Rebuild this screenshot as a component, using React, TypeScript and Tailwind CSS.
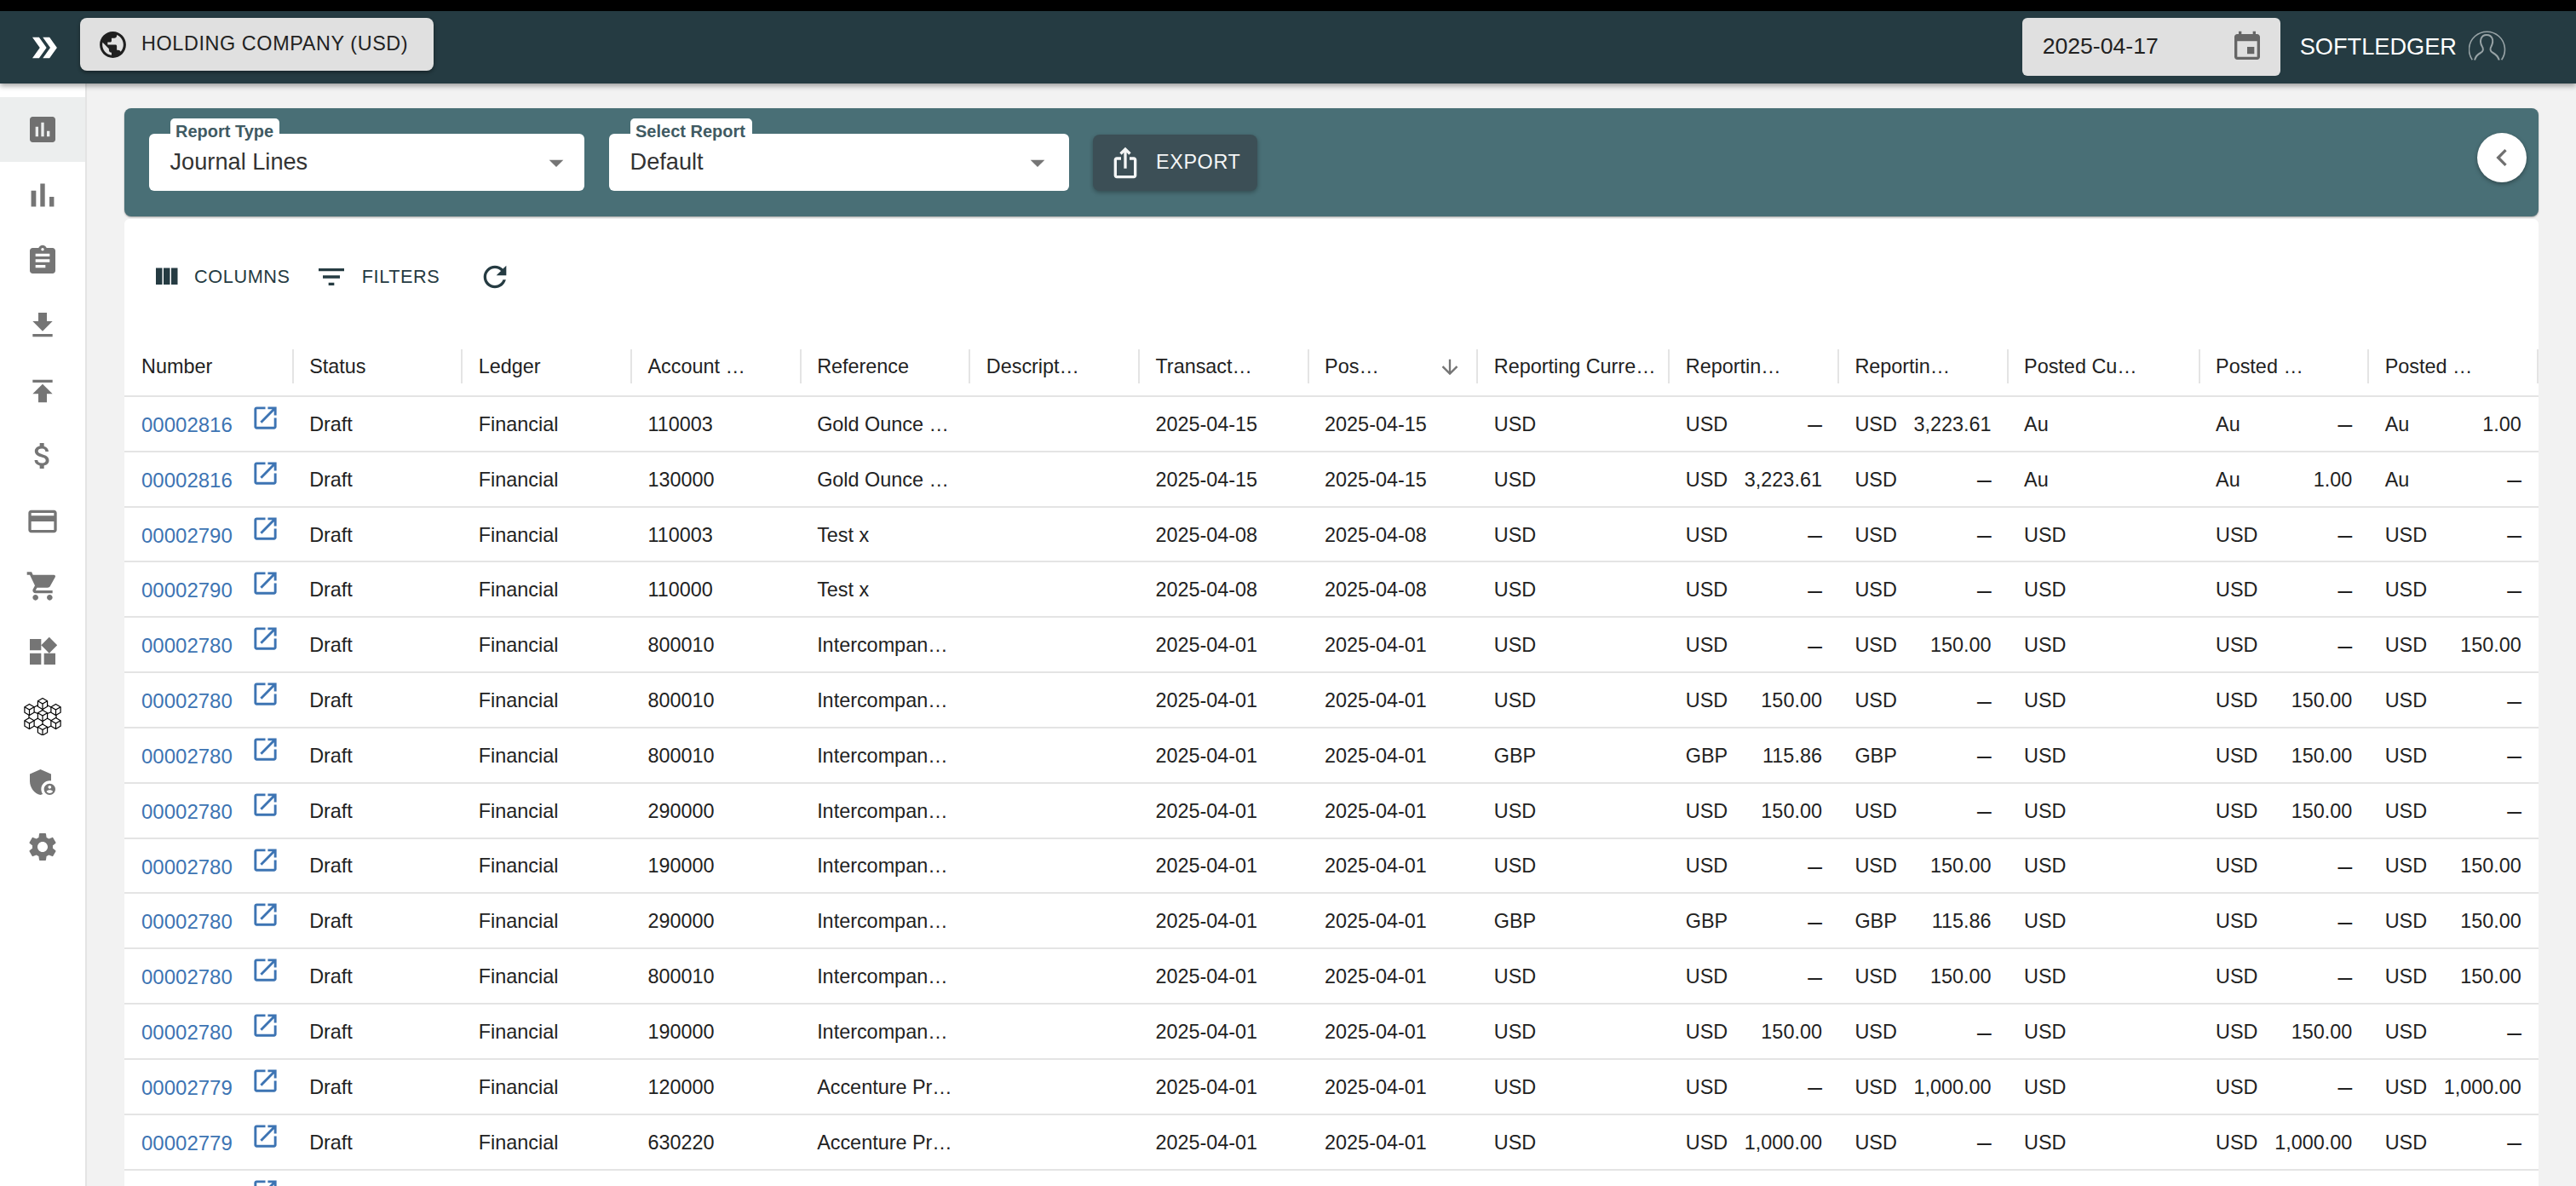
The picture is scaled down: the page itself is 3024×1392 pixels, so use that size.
import React from 'react';

const Icon: React.FC<{ d: string | string[]; className?: string }> = ({ d, className }) => (
  <svg viewBox="0 0 24 24" fill="currentColor" className={className}>
    {(Array.isArray(d) ? d : [d]).map((p, i) => (
      <path key={i} d={p} />
    ))}
  </svg>
);

const paths = {
  assessment: 'M19 3H5c-1.1 0-2 .9-2 2v14c0 1.1.9 2 2 2h14c1.1 0 2-.9 2-2V5c0-1.1-.9-2-2-2zM9 17H7v-7h2v7zm4 0h-2V7h2v10zm4 0h-2v-4h2v4z',
  barChart: 'M5 9.2h3V19H5zM10.6 5h2.8v14h-2.8zm5.6 8H19v6h-2.8z',
  assignment: 'M19 3h-4.18C14.4 1.84 13.3 1 12 1c-1.3 0-2.4.84-2.82 2H5c-1.1 0-2 .9-2 2v14c0 1.1.9 2 2 2h14c1.1 0 2-.9 2-2V5c0-1.1-.9-2-2-2zm-7 0c.55 0 1 .45 1 1s-.45 1-1 1-1-.45-1-1 .45-1 1-1zm2 14H7v-2h7v2zm3-4H7v-2h10v2zm0-4H7V7h10v2z',
  download: 'M19 9h-4V3H9v6H5l7 7 7-7zM5 18v2h14v-2H5z',
  publish: 'M5 4v2h14V4H5zm0 10h4v6h6v-6h4l-7-7-7 7z',
  money: 'M11.8 10.9c-2.27-.59-3-1.2-3-2.15 0-1.09 1.01-1.85 2.7-1.85 1.78 0 2.44.85 2.5 2.1h2.21c-.07-1.72-1.12-3.3-3.21-3.81V3h-3v2.16c-1.94.42-3.5 1.68-3.5 3.61 0 2.31 1.91 3.46 4.7 4.13 2.5.6 3 1.48 3 2.41 0 .69-.49 1.79-2.7 1.79-2.06 0-2.87-.92-2.98-2.1h-2.2c.12 2.19 1.76 3.42 3.68 3.83V21h3v-2.15c1.95-.37 3.5-1.5 3.5-3.55 0-2.84-2.43-3.81-4.7-4.4z',
  card: 'M20 4H4c-1.11 0-1.99.89-1.99 2L2 18c0 1.11.89 2 2 2h16c1.11 0 2-.89 2-2V6c0-1.11-.89-2-2-2zm0 14H4v-6h16v6zm0-10H4V6h16v2z',
  cart: 'M7 18c-1.1 0-1.99.9-1.99 2S5.9 22 7 22s2-.9 2-2-.9-2-2-2zM1 2v2h2l3.6 7.59-1.35 2.45c-.16.28-.25.61-.25.96 0 1.1.9 2 2 2h12v-2H7.42c-.14 0-.25-.11-.25-.25l.03-.12.9-1.63h7.45c.75 0 1.41-.41 1.75-1.03l3.58-6.49c.08-.14.12-.31.12-.48 0-.55-.45-1-1-1H5.21l-.94-2H1zm16 16c-1.1 0-1.99.9-1.99 2s.89 2 1.99 2 2-.9 2-2-.9-2-2-2z',
  widgets: 'M13 13v8h8v-8h-8zM3 21h8v-8H3v8zM3 3v8h8V3H3zm13.66-1.31L11 7.34 16.66 13l5.66-5.66-5.66-5.65z',
  shield: [
    'M17 11c.34 0 .67.04 1 .09V6.27L10.5 3 3 6.27v4.91c0 4.54 3.2 8.79 7.5 9.82.55-.13 1.08-.32 1.6-.55-.69-.98-1.1-2.17-1.1-3.45 0-3.31 2.69-6 6-6z',
    'M17 13c-2.21 0-4 1.79-4 4s1.79 4 4 4 4-1.79 4-4-1.79-4-4-4zm0 1.38c.62 0 1.12.51 1.12 1.12s-.51 1.12-1.12 1.12-1.12-.51-1.12-1.12.5-1.12 1.12-1.12zm0 5.37c-.93 0-1.74-.46-2.24-1.17.05-.72 1.51-1.08 2.24-1.08s2.19.36 2.24 1.08c-.5.71-1.31 1.17-2.24 1.17z',
  ],
  settings: 'M19.14 12.94c.04-.3.06-.61.06-.94 0-.32-.02-.64-.07-.94l2.03-1.58c.18-.14.23-.41.12-.61l-1.92-3.32c-.12-.22-.37-.29-.59-.22l-2.39.96c-.5-.38-1.03-.7-1.62-.94l-.36-2.54c-.04-.24-.24-.41-.48-.41h-3.84c-.24 0-.43.17-.47.41l-.36 2.54c-.59.24-1.13.57-1.62.94l-2.39-.96c-.22-.08-.47 0-.59.22L2.74 8.87c-.12.21-.08.47.12.61l2.03 1.58c-.05.3-.09.63-.09.94s.02.64.07.94l-2.03 1.58c-.18.14-.23.41-.12.61l1.92 3.32c.12.22.37.29.59.22l2.39-.96c.5.38 1.03.7 1.62.94l.36 2.54c.05.24.24.41.48.41h3.84c.24 0 .44-.17.47-.41l.36-2.54c.59-.24 1.13-.56 1.62-.94l2.39.96c.22.08.47 0 .59-.22l1.92-3.32c.12-.22.07-.47-.12-.61l-2.01-1.58zM12 15.6c-1.98 0-3.6-1.62-3.6-3.6s1.62-3.6 3.6-3.6 3.6 1.62 3.6 3.6-1.62 3.6-3.6 3.6z',
  globe: 'M12 2C6.48 2 2 6.48 2 12s4.48 10 10 10 10-4.48 10-10S17.52 2 12 2zm-1 17.93c-3.95-.49-7-3.85-7-7.93 0-.62.08-1.21.21-1.79L9 15v1c0 1.1.9 2 2 2v1.93zm6.9-2.54c-.26-.81-1-1.39-1.9-1.39h-1v-3c0-.55-.45-1-1-1H8v-2h2c.55 0 1-.45 1-1V7h2c1.1 0 2-.9 2-2v-.41c2.93 1.19 5 4.06 5 7.41 0 2.08-.8 3.97-2.1 5.39z',
  event: 'M17 12h-5v5h5v-5zM16 1v2H8V1H6v2H5c-1.11 0-1.99.9-1.99 2L3 19c0 1.1.89 2 2 2h14c1.1 0 2-.9 2-2V5c0-1.1-.9-2-2-2h-1V1h-2zm3 18H5V8h14v11z',
  openNew: 'M19 19H5V5h7V3H5c-1.11 0-2 .9-2 2v14c0 1.1.89 2 2 2h14c1.1 0 2-.9 2-2v-7h-2v7zM14 3v2h3.59l-9.83 9.83 1.41 1.41L19 6.41V10h2V3h-7z',
  columns: 'M10 18h5V5h-5v13zm-6 0h5V5H4v13zM16 5v13h5V5h-5z',
  filter: 'M10 18h4v-2h-4v2zM3 6v2h18V6H3zm3 7h12v-2H6v2z',
  refresh: 'M17.65 6.35C16.2 4.9 14.21 4 12 4c-4.42 0-7.99 3.58-7.99 8s3.57 8 7.99 8c3.73 0 6.84-2.55 7.73-6h-2.08c-.82 2.33-3.04 4-5.65 4-3.31 0-6-2.69-6-6s2.69-6 6-6c1.66 0 3.14.69 4.22 1.78L13 11h7V4l-2.35 2.35z',
  chevronLeft: 'M15.41 7.41L14 6l-6 6 6 6 1.41-1.41L10.83 12z',
  doubleArrow: ['M15.5 5H11l5 7-5 7h4.5l5-7z', 'M8.5 5H4l5 7-5 7h4.5l5-7z'],
  share: 'M16 5l-1.42 1.42-1.59-1.59V16h-1.98V4.83L9.42 6.42 8 5l4-4 4 4zm4 5v11c0 1.1-.9 2-2 2H6c-1.11 0-2-.9-2-2V10c0-1.11.89-2 2-2h3v2H6v11h12V10h-3V8h3c1.1 0 2 .89 2 2z',
  arrowDown: 'M20 12l-1.41-1.41L13 16.17V4h-2v12.17l-5.58-5.59L4 12l8 8 8-8z',
  caret: 'M7 10l5 5 5-5z',
};

const Cube: React.FC<{ x: number; y: number }> = ({ x, y }) => (
  <g transform={`translate(${x} ${y})`}>
    <path d="M0 -6.5L5.6 -3.2V3.2L0 6.5L-5.6 3.2V-3.2Z" fill="white" />
    <path d="M-5.6 -3.2L0 0L5.6 -3.2M0 0V6.5" />
  </g>
);

const BlockchainIcon = () => (
  <svg viewBox="0 0 44 44" fill="none" stroke="black" strokeWidth="1.2" className="w-[44px] h-[44px]">
    <path d="M22 6L38 14V30L22 38L6 30V14Z M22 21L22 6 M22 21L6 14 M22 21L38 14 M22 21V38 M22 21L6 30 M22 21L38 30" />
    <Cube x={22} y={7} />
    <Cube x={6.5} y={14} />
    <Cube x={37.5} y={14} />
    <Cube x={6.5} y={30} />
    <Cube x={37.5} y={30} />
    <Cube x={22} y={37.5} />
    <Cube x={22} y={21} />
  </svg>
);

const AvatarIcon = () => (
  <svg viewBox="0 0 44 36" fill="none" stroke="#98a3a6" strokeWidth="1.6" className="w-[44px] h-[36px] ml-[14px] -mt-[2px]">
    <path d="M4.3 34.3A21 21 0 1 1 38.6 34.3" />
    <path strokeWidth="2" d="M7 34.5C8.5 29 11 27.5 14 26C17.5 24.5 17.5 21 15.8 18.5C14 15.5 13.5 12.5 14.5 9.5C15.5 6.5 18 5 21 5C24 5 26.8 6.5 27.8 9.5C28.8 12.5 28 15.5 26.5 18.5C24.8 21 25 24.5 28.5 26C31.5 27.5 34 29 35.8 34.5" />
  </svg>
);

const sidebarItems = [
  paths.barChart,
  paths.assignment,
  paths.download,
  paths.publish,
  paths.money,
  paths.card,
  paths.cart,
  paths.widgets,
];

const headers = [
  'Number',
  'Status',
  'Ledger',
  'Account …',
  'Reference',
  'Descript…',
  'Transact…',
  'Pos…',
  'Reporting Curre…',
  'Reportin…',
  'Reportin…',
  'Posted Cu…',
  'Posted …',
  'Posted …',
];

type Row = {
  number: string;
  account: string;
  reference: string;
  date: string;
  currency: string;
  rep1: string;
  rep2: string;
  postedCurrency: string;
  posted1: string;
  posted2: string;
};

const D = '–';

const row = (
  number: string,
  account: string,
  reference: string,
  date: string,
  currency: string,
  rep1: string,
  rep2: string,
  postedCurrency: string,
  posted1: string,
  posted2: string,
): Row => ({ number, account, reference, date, currency, rep1, rep2, postedCurrency, posted1, posted2 });

const rows: Row[] = [
  row('00002816', '110003', 'Gold Ounce …', '2025-04-15', 'USD', D, '3,223.61', 'Au', D, '1.00'),
  row('00002816', '130000', 'Gold Ounce …', '2025-04-15', 'USD', '3,223.61', D, 'Au', '1.00', D),
  row('00002790', '110003', 'Test x', '2025-04-08', 'USD', D, D, 'USD', D, D),
  row('00002790', '110000', 'Test x', '2025-04-08', 'USD', D, D, 'USD', D, D),
  row('00002780', '800010', 'Intercompan…', '2025-04-01', 'USD', D, '150.00', 'USD', D, '150.00'),
  row('00002780', '800010', 'Intercompan…', '2025-04-01', 'USD', '150.00', D, 'USD', '150.00', D),
  row('00002780', '800010', 'Intercompan…', '2025-04-01', 'GBP', '115.86', D, 'USD', '150.00', D),
  row('00002780', '290000', 'Intercompan…', '2025-04-01', 'USD', '150.00', D, 'USD', '150.00', D),
  row('00002780', '190000', 'Intercompan…', '2025-04-01', 'USD', D, '150.00', 'USD', D, '150.00'),
  row('00002780', '290000', 'Intercompan…', '2025-04-01', 'GBP', D, '115.86', 'USD', D, '150.00'),
  row('00002780', '800010', 'Intercompan…', '2025-04-01', 'USD', D, '150.00', 'USD', D, '150.00'),
  row('00002780', '190000', 'Intercompan…', '2025-04-01', 'USD', '150.00', D, 'USD', '150.00', D),
  row('00002779', '120000', 'Accenture Pr…', '2025-04-01', 'USD', D, '1,000.00', 'USD', D, '1,000.00'),
  row('00002779', '630220', 'Accenture Pr…', '2025-04-01', 'USD', '1,000.00', D, 'USD', '1,000.00', D),
];

const gridCols =
  'grid grid-cols-[repeat(8,198.67px)_225px_repeat(2,198.67px)_225px_repeat(2,198.67px)]';

const Cell: React.FC<{ children?: React.ReactNode }> = ({ children }) => (
  <div className="pl-[18.5px] pr-[8px] pt-[2px] flex items-center whitespace-nowrap overflow-hidden">{children}</div>
);

const MoneyCell: React.FC<{ currency: string; value: string }> = ({ currency, value }) => (
  <div className="pl-[18.5px] pr-[20px] pt-[2px] flex items-center justify-between whitespace-nowrap">
    <span>{currency}</span>
    <span className={value === D ? 'text-[30px] leading-none' : ''}>{value}</span>
  </div>
);

const NumberCell: React.FC<{ number?: string }> = ({ number }) => (
  <div className="pl-[20px] flex items-center">
    <a className="w-[108px] mt-[3px] text-[24px] text-[#3d74b3]">{number}</a>
    <Icon d={paths.openNew} className="w-[35px] h-[35px] ml-[20px] self-start mt-[7px] text-[#3d74b3]" />
  </div>
);

const SelectBox: React.FC<{ label: string; value: string; width: string; labelWidth: string }> = ({
  label,
  value,
  width,
  labelWidth,
}) => (
  <div className={`relative h-[67px] bg-white rounded-[6px] flex items-center pl-[24.5px] ${width}`}>
    <span
      className={`absolute left-[25px] -top-[18px] h-[20px] rounded-t-[5px] bg-white pl-[6px] text-[20px] leading-[30px] font-bold text-[#3f5a62] ${labelWidth}`}
    >
      {label}
    </span>
    <span className="text-[27.2px] text-[#333]">{value}</span>
    <Icon d={paths.caret} className="w-[40px] h-[40px] ml-auto text-[#757575]" />
  </div>
);

export default function App() {
  return (
    <div className="w-[3024px] h-[1392px] overflow-hidden flex flex-col bg-[#f2f2f2] font-['Liberation_Sans',Arial,sans-serif] text-[23.4px] text-[#222]">
      <div className="h-[13px] bg-black shrink-0" />

      <header className="relative z-10 h-[85px] shrink-0 bg-[#253b42] shadow-[0_3px_6px_rgba(0,0,0,0.35)] flex items-start pt-[8px] pl-[31px] pr-[82px]">
        <Icon d={paths.doubleArrow} className="w-[42px] h-[42px] mt-[14px] text-white" />
        <button className="ml-[21px] w-[415px] h-[62px] rounded-[8px] bg-[#e0e0e0] shadow-[0_2px_4px_rgba(0,0,0,0.4)] flex items-center pl-[20px] tracking-[0.6px] text-[#222]">
          <Icon d={paths.globe} className="w-[37px] h-[37px] mr-[15px] text-[#1f1f1f]" />
          HOLDING COMPANY (USD)
        </button>
        <div className="ml-auto w-[303px] h-[68px] rounded-[6px] bg-[#e0e0e0] flex items-center pl-[24px] pr-[19px] text-[26.6px]">
          2025-04-17
          <Icon d={paths.event} className="w-[40px] h-[40px] ml-auto text-[#666]" />
        </div>
        <div className="ml-[23px] h-[68px] flex items-center text-[27.2px] text-white">
          SOFTLEDGER
          <AvatarIcon />
        </div>
      </header>

      <div className="flex flex-1 min-h-0">
        <aside className="w-[102px] shrink-0 bg-white border-r-2 border-[#e4e4e4] pt-[16px]">
          <div className="h-[76px] mb-[1px] bg-[#eceeee] flex items-center justify-center text-[#707070]">
            <Icon d={paths.assessment} className="w-[40px] h-[40px]" />
          </div>
          {sidebarItems.map((d, i) => (
            <div key={i} className="h-[76.5px] flex items-center justify-center text-[#757575]">
              <Icon d={d} className={i === 0 ? 'w-[46px] h-[46px]' : 'w-[40px] h-[40px]'} />
            </div>
          ))}
          <div className="h-[76.5px] flex items-center justify-center">
            <BlockchainIcon />
          </div>
          <div className="h-[76.5px] flex items-center justify-center text-[#757575]">
            <Icon d={paths.shield} className="w-[40px] h-[40px]" />
          </div>
          <div className="h-[76.5px] flex items-center justify-center text-[#757575]">
            <Icon d={paths.settings} className="w-[40px] h-[40px]" />
          </div>
        </aside>

        <main className="flex-1 min-w-0 pt-[29px] pl-[44px] pr-[44px]">
          <div className="h-[127px] rounded-[8px] bg-[#496f76] shadow-[0_1px_2px_rgba(0,0,0,0.35)] flex items-start pt-[30px] pl-[29px] pr-[14px]">
            <SelectBox label="Report Type" value="Journal Lines" width="w-[511px] pr-[13px]" labelWidth="w-[128px]" />
            <div className="w-[29px] shrink-0" />
            <SelectBox label="Select Report" value="Default" width="w-[540px] pr-[17px]" labelWidth="w-[143px]" />
            <button className="ml-[28px] mt-[1px] w-[193px] h-[66px] rounded-[8px] bg-[#3c4f56] shadow-[0_2px_5px_rgba(0,0,0,0.3)] flex items-center pl-[18px] text-[#f4f6f6] text-[23.4px] tracking-[0.6px]">
              <Icon d={paths.share} className="w-[40px] h-[40px] mr-[16px]" />
              EXPORT
            </button>
            <button className="ml-auto mt-[-1px] w-[58px] h-[58px] rounded-full bg-white shadow-[0_2px_5px_rgba(0,0,0,0.35)] flex items-center justify-center text-[#707070]">
              <Icon d={paths.chevronLeft} className="w-[40px] h-[40px]" />
            </button>
          </div>

          <section className="mt-[3px] bg-white rounded-t-[6px]">
            <div className="h-[138px] pb-[2px] pl-[31px] flex items-center text-[21.7px] tracking-[0.6px] text-[#253b42]">
              <Icon d={paths.columns} className="w-[36px] h-[36px] mr-[15px]" />
              COLUMNS
              <Icon d={paths.filter} className="w-[40px] h-[40px] ml-[28px] mr-[16px]" />
              FILTERS
              <Icon d={paths.refresh} className="w-[40px] h-[40px] ml-[45px]" />
            </div>

            <div className={`${gridCols} h-[71px] border-b-2 border-[#e4e4e4] items-center`}>
              {headers.map((h, i) => (
                <div
                  key={i}
                  className={`h-[40px] border-r-2 border-[#e4e4e4] flex items-center whitespace-nowrap pr-[8px] pt-[2px] ${
                    i === 0 ? 'pl-[20px]' : 'pl-[18.5px]'
                  }`}
                >
                  {h}
                  {i === 7 && (
                    <Icon d={paths.arrowDown} className="w-[28px] h-[28px] ml-auto mr-[9px] text-[#757575]" />
                  )}
                </div>
              ))}
            </div>

            {rows.map((r, i) => (
              <div key={i} className={`${gridCols} h-[64.83px] border-b-2 border-[#e4e4e4]`}>
                <NumberCell number={r.number} />
                <Cell>Draft</Cell>
                <Cell>Financial</Cell>
                <Cell>{r.account}</Cell>
                <Cell>{r.reference}</Cell>
                <Cell />
                <Cell>{r.date}</Cell>
                <Cell>{r.date}</Cell>
                <Cell>{r.currency}</Cell>
                <MoneyCell currency={r.currency} value={r.rep1} />
                <MoneyCell currency={r.currency} value={r.rep2} />
                <Cell>{r.postedCurrency}</Cell>
                <MoneyCell currency={r.postedCurrency} value={r.posted1} />
                <MoneyCell currency={r.postedCurrency} value={r.posted2} />
              </div>
            ))}

            <div className={`${gridCols} h-[64.83px]`}>
              <NumberCell />
            </div>
          </section>
        </main>
      </div>
    </div>
  );
}
